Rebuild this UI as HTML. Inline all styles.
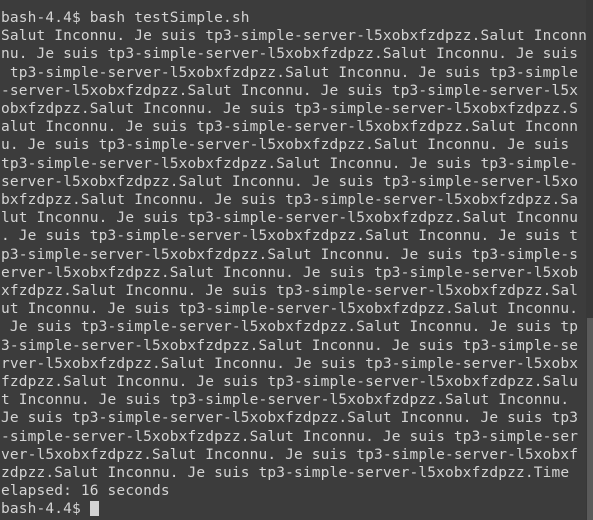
<!DOCTYPE html>
<html><head><style>
html,body{margin:0;padding:0;background:#3c3c3c;width:593px;height:520px;overflow:hidden}
pre{margin:0;position:absolute;left:1px;top:9px;font-family:"DejaVu Sans Mono",monospace;font-size:14.5px;letter-spacing:0.15px;line-height:18.2px;color:#d4d4d4;white-space:pre}
.cur{display:inline-block;width:9px;height:15px;background:#d4d4d4;vertical-align:-3px}
.sb{position:absolute;left:587px;top:318px;width:6px;height:202px;background:#5a5a5a}
.track{position:absolute;left:586px;top:0;width:7px;height:520px;background:#383838}
</style></head><body>
<div class="track"></div><div class="sb"></div>
<pre>bash-4.4$ bash testSimple.sh
Salut Inconnu. Je suis tp3-simple-server-l5xobxfzdpzz.Salut Inconn
nu. Je suis tp3-simple-server-l5xobxfzdpzz.Salut Inconnu. Je suis
 tp3-simple-server-l5xobxfzdpzz.Salut Inconnu. Je suis tp3-simple
-server-l5xobxfzdpzz.Salut Inconnu. Je suis tp3-simple-server-l5x
obxfzdpzz.Salut Inconnu. Je suis tp3-simple-server-l5xobxfzdpzz.S
alut Inconnu. Je suis tp3-simple-server-l5xobxfzdpzz.Salut Inconn
u. Je suis tp3-simple-server-l5xobxfzdpzz.Salut Inconnu. Je suis
tp3-simple-server-l5xobxfzdpzz.Salut Inconnu. Je suis tp3-simple-
server-l5xobxfzdpzz.Salut Inconnu. Je suis tp3-simple-server-l5xo
bxfzdpzz.Salut Inconnu. Je suis tp3-simple-server-l5xobxfzdpzz.Sa
lut Inconnu. Je suis tp3-simple-server-l5xobxfzdpzz.Salut Inconnu
. Je suis tp3-simple-server-l5xobxfzdpzz.Salut Inconnu. Je suis t
p3-simple-server-l5xobxfzdpzz.Salut Inconnu. Je suis tp3-simple-s
erver-l5xobxfzdpzz.Salut Inconnu. Je suis tp3-simple-server-l5xob
xfzdpzz.Salut Inconnu. Je suis tp3-simple-server-l5xobxfzdpzz.Sal
ut Inconnu. Je suis tp3-simple-server-l5xobxfzdpzz.Salut Inconnu.
 Je suis tp3-simple-server-l5xobxfzdpzz.Salut Inconnu. Je suis tp
3-simple-server-l5xobxfzdpzz.Salut Inconnu. Je suis tp3-simple-se
rver-l5xobxfzdpzz.Salut Inconnu. Je suis tp3-simple-server-l5xobx
fzdpzz.Salut Inconnu. Je suis tp3-simple-server-l5xobxfzdpzz.Salu
t Inconnu. Je suis tp3-simple-server-l5xobxfzdpzz.Salut Inconnu.
Je suis tp3-simple-server-l5xobxfzdpzz.Salut Inconnu. Je suis tp3
-simple-server-l5xobxfzdpzz.Salut Inconnu. Je suis tp3-simple-ser
ver-l5xobxfzdpzz.Salut Inconnu. Je suis tp3-simple-server-l5xobxf
zdpzz.Salut Inconnu. Je suis tp3-simple-server-l5xobxfzdpzz.Time
elapsed: 16 seconds
bash-4.4$ <span class="cur"></span></pre>
</body></html>
